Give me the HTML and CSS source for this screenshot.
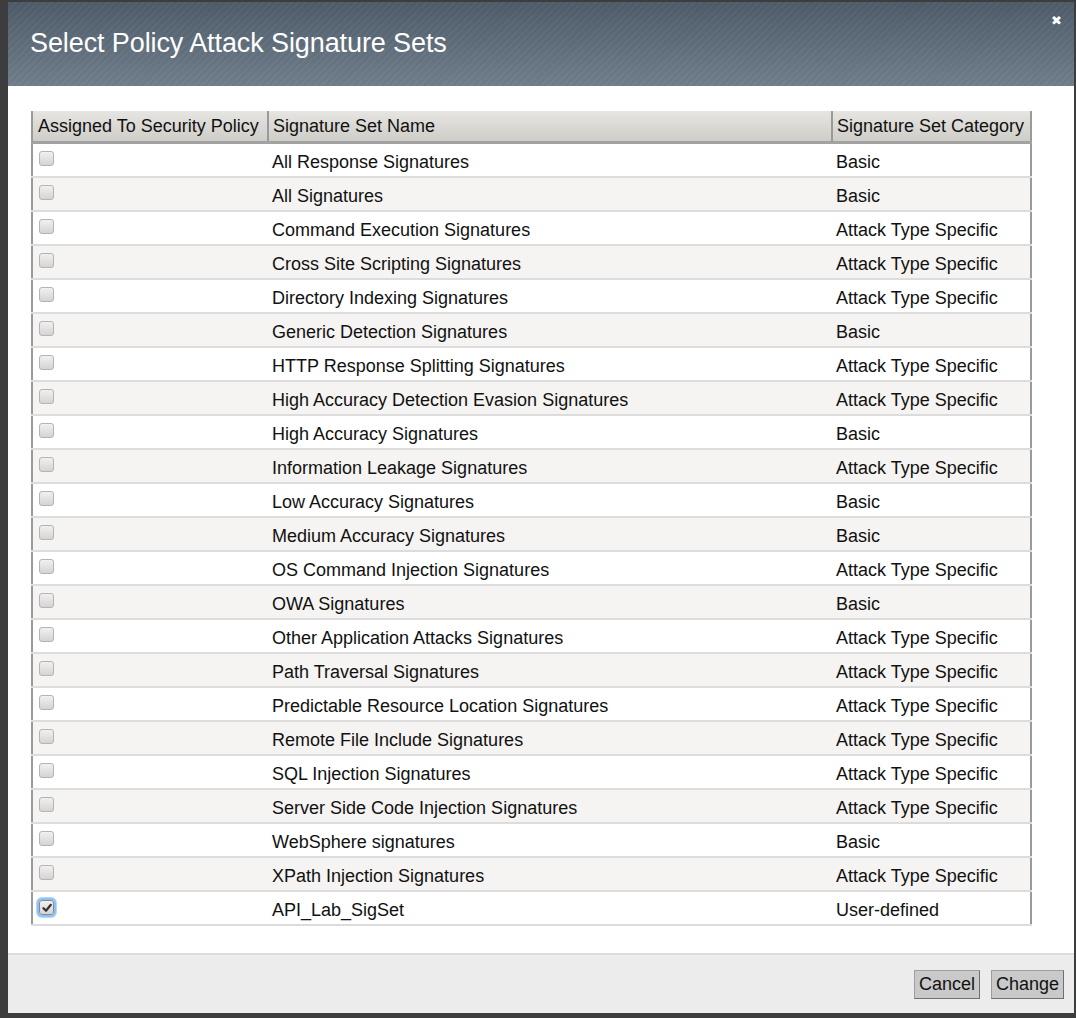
FILE: index.html
```html
<!DOCTYPE html>
<html>
<head>
<meta charset="utf-8">
<link rel="stylesheet" href="styles.css">
</head>
<body>
<div class="dialog">
  <div class="titlebar">
    <h1 class="title">Select Policy Attack Signature Sets</h1>
    <span class="close">&#x2716;</span>
  </div>
  <div class="content">
    <table class="grid">
      <thead>
        <tr>
          <th class="c1">Assigned To Security Policy</th>
          <th class="c2">Signature Set Name</th>
          <th class="c3">Signature Set Category</th>
        </tr>
      </thead>
      <tbody>
        <tr><td class="c1"><span class="cb"></span></td><td>All Response Signatures</td><td>Basic</td></tr>
        <tr><td class="c1"><span class="cb"></span></td><td>All Signatures</td><td>Basic</td></tr>
        <tr><td class="c1"><span class="cb"></span></td><td>Command Execution Signatures</td><td>Attack Type Specific</td></tr>
        <tr><td class="c1"><span class="cb"></span></td><td>Cross Site Scripting Signatures</td><td>Attack Type Specific</td></tr>
        <tr><td class="c1"><span class="cb"></span></td><td>Directory Indexing Signatures</td><td>Attack Type Specific</td></tr>
        <tr><td class="c1"><span class="cb"></span></td><td>Generic Detection Signatures</td><td>Basic</td></tr>
        <tr><td class="c1"><span class="cb"></span></td><td>HTTP Response Splitting Signatures</td><td>Attack Type Specific</td></tr>
        <tr><td class="c1"><span class="cb"></span></td><td>High Accuracy Detection Evasion Signatures</td><td>Attack Type Specific</td></tr>
        <tr><td class="c1"><span class="cb"></span></td><td>High Accuracy Signatures</td><td>Basic</td></tr>
        <tr><td class="c1"><span class="cb"></span></td><td>Information Leakage Signatures</td><td>Attack Type Specific</td></tr>
        <tr><td class="c1"><span class="cb"></span></td><td>Low Accuracy Signatures</td><td>Basic</td></tr>
        <tr><td class="c1"><span class="cb"></span></td><td>Medium Accuracy Signatures</td><td>Basic</td></tr>
        <tr><td class="c1"><span class="cb"></span></td><td>OS Command Injection Signatures</td><td>Attack Type Specific</td></tr>
        <tr><td class="c1"><span class="cb"></span></td><td>OWA Signatures</td><td>Basic</td></tr>
        <tr><td class="c1"><span class="cb"></span></td><td>Other Application Attacks Signatures</td><td>Attack Type Specific</td></tr>
        <tr><td class="c1"><span class="cb"></span></td><td>Path Traversal Signatures</td><td>Attack Type Specific</td></tr>
        <tr><td class="c1"><span class="cb"></span></td><td>Predictable Resource Location Signatures</td><td>Attack Type Specific</td></tr>
        <tr><td class="c1"><span class="cb"></span></td><td>Remote File Include Signatures</td><td>Attack Type Specific</td></tr>
        <tr><td class="c1"><span class="cb"></span></td><td>SQL Injection Signatures</td><td>Attack Type Specific</td></tr>
        <tr><td class="c1"><span class="cb"></span></td><td>Server Side Code Injection Signatures</td><td>Attack Type Specific</td></tr>
        <tr><td class="c1"><span class="cb"></span></td><td>WebSphere signatures</td><td>Basic</td></tr>
        <tr><td class="c1"><span class="cb"></span></td><td>XPath Injection Signatures</td><td>Attack Type Specific</td></tr>
        <tr><td class="c1"><span class="cb checked"><svg width="10" height="10" viewBox="0 0 10 10"><path d="M1.5 5.2 L4 7.8 L8.8 1.8" fill="none" stroke="#333" stroke-width="2.2" stroke-linecap="round" stroke-linejoin="round"/></svg></span></td><td>API_Lab_SigSet</td><td>User-defined</td></tr>
      </tbody>
    </table>
  </div>
  <div class="footer">
    <button class="btn">Cancel</button>
    <button class="btn">Change</button>
  </div>
</div>
</body>
</html>
```

FILE: styles.css
```css
html, body {
  margin: 0;
  padding: 0;
  background: #3d3d3d;
  height: 1018px;
  overflow: hidden;
}
body {
  padding: 2px 2px 0 8px;
  font-family: "Liberation Sans", Arial, sans-serif;
}
.dialog {
  width: 1066px;
  height: 1011px;
  background: #fff;
  display: flex;
  flex-direction: column;
}
.titlebar {
  height: 84px;
  flex: none;
  position: relative;
  display: flex;
  align-items: center;
  background:
    repeating-linear-gradient(135deg, rgba(255,255,255,0.035) 0 2px, rgba(0,0,0,0) 2px 5px),
    linear-gradient(to bottom, #4d5a67, #6f7d8b);
}
.title {
  margin: 0 0 1px 22px;
  color: #fff;
  font-size: 27px;
  font-weight: normal;
  letter-spacing: -0.1px;
}
.close {
  position: absolute;
  right: 12px;
  top: 11px;
  color: #fff;
  font-size: 13px;
  font-family: "DejaVu Sans", sans-serif;
}
.content {
  flex: 1;
  padding: 25px 0 0 23px;
}
.grid {
  border-collapse: collapse;
  width: 1001px;
  font-size: 18px;
  color: #111;
  border-left: 2px solid #9a9a9a;
  border-right: 2px solid #9a9a9a;
}
.grid th {
  height: 30px;
  padding: 0 4px 0 4px;
  text-align: left;
  font-weight: normal;
  background: linear-gradient(to bottom, #e6e5e1, #cfcdc8);
  border-bottom: 3px solid #a2a2a2;
  border-left: 2px solid #9a9a9a;
  white-space: nowrap;
}
.grid th.c1 {
  border-left: none;
  padding-left: 5px;
  width: 225px;
}
.grid th.c2 { width: 554px; }
.grid td {
  height: 28px;
  padding: 4px 4px 0 4px;
  border-bottom: 2px solid #dcdcdc;
  white-space: nowrap;
}
.grid td.c1 {
  padding-left: 6px;
  vertical-align: top;
  padding-top: 7px;
  height: 25px;
}
.grid tbody tr:nth-child(even) td { background: #f5f4f2; }
.grid tbody tr:nth-child(odd) td { background: #fff; }
.cb {
  display: block;
  width: 13px;
  height: 13px;
  border: 1px solid #b4b4b4;
  border-radius: 3px;
  background: linear-gradient(to bottom, #f0f0f0, #d4d4d4);
  box-sizing: content-box;
}
.cb.checked {
  display: flex;
  align-items: center;
  justify-content: center;
  border-color: #8a8a8a;
  box-shadow: 0 0 0 2px #8cc1f7, 0 0 0 3px #b8d8fb;
  margin-top: 1px;
}
.footer {
  height: 58px;
  flex: none;
  background: #ececec;
  border-top: 2px solid #dcdcdc;
  display: flex;
  justify-content: flex-end;
  align-items: center;
  gap: 11px;
  padding-right: 10px;
}
.btn {
  font-family: "Liberation Sans", Arial, sans-serif;
  font-size: 18px;
  color: #111;
  background: #c9c9c9;
  border: 1px solid #9e9e9e;
  border-right-color: #6f6f6f;
  border-bottom-color: #6f6f6f;
  padding: 0 4px;
  height: 29px;
  margin-top: 0;
}
```
